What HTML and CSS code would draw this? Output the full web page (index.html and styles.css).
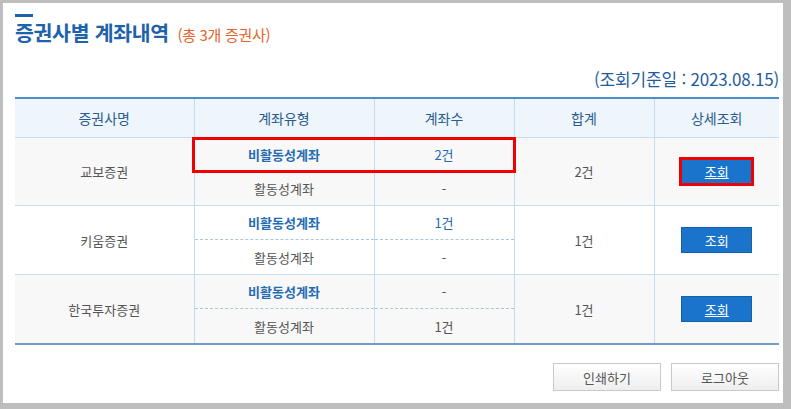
FILE: index.html
```html
<!DOCTYPE html>
<html lang="ko">
<head>
    <meta charset="UTF-8">
    <title>증권사별 계좌내역</title>
    <link rel="stylesheet" href="styles.css">
</head>
<body>

<div class="window">
    <h1 class="page-title">증권사별 계좌내역 <span class="title-count">(총 3개 증권사)</span></h1>

    <div class="base-date">(조회기준일 : 2023.08.15)</div>

    <div class="table-wrap">
        <table class="account-table">
            <colgroup>
                <col style="width:179px">
                <col style="width:180px">
                <col style="width:140px">
                <col style="width:140px">
                <col>
            </colgroup>
            <thead>
                <tr>
                    <th>증권사명</th>
                    <th>계좌유형</th>
                    <th>계좌수</th>
                    <th>합계</th>
                    <th>상세조회</th>
                </tr>
            </thead>
            <tbody>
                <tr class="grey top">
                    <td rowspan="2">교보증권</td>
                    <td class="inactive">비활동성계좌</td>
                    <td class="count">2건</td>
                    <td rowspan="2">2건</td>
                    <td rowspan="2"><button class="view-button underline">조회</button></td>
                </tr>
                <tr class="grey">
                    <td class="sub">활동성계좌</td>
                    <td class="sub">-</td>
                </tr>
                <tr class="top">
                    <td rowspan="2">키움증권</td>
                    <td class="inactive">비활동성계좌</td>
                    <td class="count">1건</td>
                    <td rowspan="2">1건</td>
                    <td rowspan="2"><button class="view-button">조회</button></td>
                </tr>
                <tr>
                    <td class="sub dashed">활동성계좌</td>
                    <td class="sub dashed">-</td>
                </tr>
                <tr class="grey top">
                    <td rowspan="2">한국투자증권</td>
                    <td class="inactive">비활동성계좌</td>
                    <td>-</td>
                    <td rowspan="2">1건</td>
                    <td rowspan="2"><button class="view-button underline">조회</button></td>
                </tr>
                <tr class="grey">
                    <td class="sub dashed">활동성계좌</td>
                    <td class="sub dashed">1건</td>
                </tr>
            </tbody>
        </table>

        <!-- 선택 표시 -->
        <div class="highlight-box"></div>
        <div class="highlight-btn"></div>
    </div>

    <div class="bottom-buttons">
        <button class="gray-button">인쇄하기</button>
        <button class="gray-button">로그아웃</button>
    </div>
</div>

</body>
</html>
```

FILE: styles.css
```css
body {
    margin: 0;
    padding: 0;
    background-color: #bebebe;
    font-family: "Noto Sans CJK KR", "Noto Sans", sans-serif;
    color: #555;
}

.window {
    background-color: #ffffff;
    margin: 3px 8px 0 3px;
    height: 400px;
    padding: 11px 4px 0 12px;
    box-sizing: border-box;
}

.page-title {
    margin: 0;
    font-size: 20.5px;
    line-height: 24px;
    font-weight: bold;
    color: #1d62ab;
    letter-spacing: -0.3px;
}

.page-title::before {
    content: "";
    display: block;
    width: 18px;
    height: 3px;
    background-color: #1d62ab;
    margin-bottom: 3px;
}

.title-count {
    font-size: 15px;
    font-weight: normal;
    color: #e4642c;
    letter-spacing: -0.3px;
    margin-left: 3px;
}

.base-date {
    text-align: right;
    font-size: 17px;
    color: #1e5c9e;
    margin-top: 20px;
    line-height: 24px;
    letter-spacing: -0.2px;
}

.table-wrap {
    position: relative;
    margin-top: 6px;
}

.account-table {
    width: 764px;
    border-collapse: collapse;
    table-layout: fixed;
    font-size: 13px;
    border-top: 2px solid #4b8fc9;
    border-bottom: 2px solid #6f9ccb;
}

.account-table th {
    height: 38px;
    padding: 0;
    background-color: #eef6fc;
    color: #2c5b8c;
    font-size: 14px;
    font-weight: normal;
    border-left: 1px solid #c6dcec;
    border-bottom: 1px solid #c6dcec;
}

.account-table td {
    height: 34px;
    padding: 0;
    text-align: center;
    border-left: 1px solid #c6dcec;
    color: #555;
}

.account-table tr.top td {
    height: 33px;
}

.account-table th:first-child,
.account-table tr.top td:first-child {
    border-left: none;
}

.account-table tr.top td {
    border-top: 1px solid #c6dcec;
}

.account-table tbody tr.top:first-child td {
    border-top: none;
}

.account-table tr.grey td {
    background-color: #f8f8f8;
}

.account-table td.inactive {
    color: #236bb3;
    font-weight: bold;
}

.account-table td.count {
    color: #236bb3;
}

.account-table td.dashed {
    border-top: 1px dashed #a9c6dc;
}

.view-button {
    width: 71px;
    height: 26px;
    background-color: #1a74cc;
    border: 1px solid #1560a8;
    color: #ffffff;
    font-family: "Noto Sans CJK KR", sans-serif;
    font-size: 13px;
    padding: 0;
    cursor: pointer;
}

.view-button.underline {
    text-decoration: underline;
}

.highlight-box {
    position: absolute;
    left: 177px;
    top: 40px;
    width: 324px;
    height: 36px;
    border: 3px solid #f00000;
    box-sizing: border-box;
}

.highlight-btn {
    position: absolute;
    left: 664px;
    top: 60px;
    width: 75px;
    height: 29px;
    border: 3px solid #f00000;
    box-sizing: border-box;
}

.bottom-buttons {
    display: flex;
    justify-content: flex-end;
    gap: 10px;
    margin-top: 18px;
}

.gray-button {
    width: 108px;
    height: 28px;
    border: 1px solid #c9c9c9;
    background: linear-gradient(#ffffff, #eeeeee);
    color: #555;
    font-family: "Noto Sans CJK KR", sans-serif;
    font-size: 13px;
    cursor: pointer;
}
```
